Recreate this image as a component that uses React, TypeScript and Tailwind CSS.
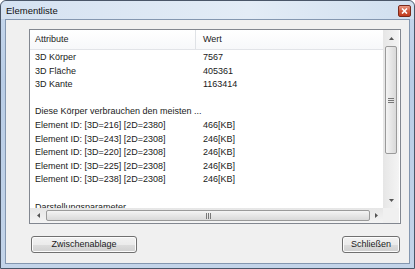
import React from "react";

const rows: [string, string][] = [
  ["3D Körper", "7567"],
  ["3D Fläche", "405361"],
  ["3D Kante", "1163414"],
  ["", ""],
  ["Diese Körper verbrauchen den meisten ...", ""],
  ["Element ID: [3D=216] [2D=2380]", "466[KB]"],
  ["Element ID: [3D=243] [2D=2308]", "246[KB]"],
  ["Element ID: [3D=220] [2D=2308]", "246[KB]"],
  ["Element ID: [3D=225] [2D=2308]", "246[KB]"],
  ["Element ID: [3D=238] [2D=2308]", "246[KB]"],
  ["", ""],
  ["Darstellungsparameter", ""],
];

function Arrow({ dir }: { dir: "up" | "down" | "left" | "right" }) {
  const pts = {
    up: "0,3 5,3 2.5,0",
    down: "0,0 5,0 2.5,3",
    left: "3,0 3,5 0,2.5",
    right: "0,0 0,5 3,2.5",
  }[dir];
  const vertical = dir === "up" || dir === "down";
  return (
    <svg width={vertical ? 5 : 3} height={vertical ? 3 : 5} viewBox={vertical ? "0 0 5 3" : "0 0 3 5"}>
      <polygon points={pts} fill="#555" />
    </svg>
  );
}

function Button({ label, width }: { label: string; width: string }) {
  return (
    <button
      className={`${width} h-[17px] rounded-[3px] border border-[#707070] bg-[linear-gradient(#f2f2f2_0%,#ebebeb_50%,#dddddd_51%,#cfcfcf_100%)] text-[9px] text-[#1a1a1a] shadow-[inset_0_0_0_1px_#fcfcfc]`}
    >
      {label}
    </button>
  );
}

export default function App() {
  return (
    <div className="w-[415px] h-[269px] bg-white font-['Liberation_Sans',Arial,sans-serif]">
      <div className="flex flex-col w-full h-full rounded-t-[6px] border border-[#4a5668] bg-[linear-gradient(#c6d7ec,#b9cde6_30%,#c3d4e9)]">
        {/* title bar */}
        <div className="relative flex items-center h-[18px] pl-[5px] bg-[linear-gradient(90deg,#d5e2f1,#e3ecf6_60%,#d0dfef)] rounded-t-[6px]">
          <span className="text-[9.5px] text-[#111] pt-[3px]">Elementliste</span>
          <div className="absolute right-[3px] top-[4px] w-[13px] h-[12px] rounded-[2px] border border-[#7a2a1c] bg-[linear-gradient(#e99a85,#d05a3e_50%,#c23b1c)] flex items-center justify-center">
            <svg width="7" height="6" viewBox="0 0 7 6">
              <path d="M1 0.5 L6 5.5 M6 0.5 L1 5.5" stroke="white" strokeWidth="1.6" />
            </svg>
          </div>
        </div>
        {/* client area */}
        <div className="flex-1 mx-[4px] mb-[4px] border border-[#8497b0] bg-[#f0f0f0] pt-[9px] pl-[23px] pr-[8px] flex flex-col">
          <div className="h-[195px] border border-[#828790] bg-white grid grid-cols-[353px_16px] grid-rows-[178px_15px]">
            {/* content */}
            <div className="overflow-hidden">
              <div className="flex h-[20px] border-b border-[#e2e4e8] bg-[linear-gradient(#ffffff,#f7f8fa)] text-[9px] text-[#222]">
                <div className="w-[166px] border-r border-[#dfe2e6] pl-[5px] flex items-center">Attribute</div>
                <div className="flex-1 pl-[7px] flex items-center">Wert</div>
              </div>
              {rows.map(([a, v], i) => (
                <div key={i} className="flex h-[13.6px] leading-[14.6px] text-[9px] text-[#1a1a1a] whitespace-nowrap">
                  <div className="w-[166px] pl-[5px]">{a}</div>
                  <div className="pl-[7px]">{v}</div>
                </div>
              ))}
            </div>
            {/* vertical scrollbar */}
            <div className="flex flex-col bg-[linear-gradient(90deg,#e6e6e6,#f4f4f4)]">
              <div className="h-[16px] flex items-center justify-center">
                <Arrow dir="up" />
              </div>
              <div className="h-[108px] mx-[2px] rounded-[2px] border border-[#9a9a9a] bg-[linear-gradient(90deg,#f4f4f4,#e6e6e6_50%,#d9d9d9)] flex items-center justify-center">
                <div className="flex flex-col gap-[1px]">
                  <div className="w-[6px] h-[1px] bg-[#777]" />
                  <div className="w-[6px] h-[1px] bg-[#777]" />
                  <div className="w-[6px] h-[1px] bg-[#777]" />
                </div>
              </div>
              <div className="flex-1" />
              <div className="h-[16px] flex items-center justify-center">
                <Arrow dir="down" />
              </div>
            </div>
            {/* horizontal scrollbar */}
            <div className="flex bg-[linear-gradient(#e6e6e6,#f4f4f4)]">
              <div className="w-[16px] flex items-center justify-center">
                <Arrow dir="left" />
              </div>
              <div className="w-[324px] my-[2px] rounded-[2px] border border-[#9a9a9a] bg-[linear-gradient(#f4f4f4,#e6e6e6_50%,#d9d9d9)] flex items-center justify-center">
                <div className="flex gap-[1px]">
                  <div className="w-[1px] h-[6px] bg-[#777]" />
                  <div className="w-[1px] h-[6px] bg-[#777]" />
                  <div className="w-[1px] h-[6px] bg-[#777]" />
                </div>
              </div>
              <div className="flex-1 flex items-center justify-center">
                <Arrow dir="right" />
              </div>
            </div>
            <div className="bg-[#f0f0f0]" />
          </div>
          <div className="flex justify-between mt-[12px] pl-[2px] pr-[1px]">
            <Button label="Zwischenablage" width="w-[106px]" />
            <Button label="Schließen" width="w-[58px]" />
          </div>
        </div>
      </div>
    </div>
  );
}
